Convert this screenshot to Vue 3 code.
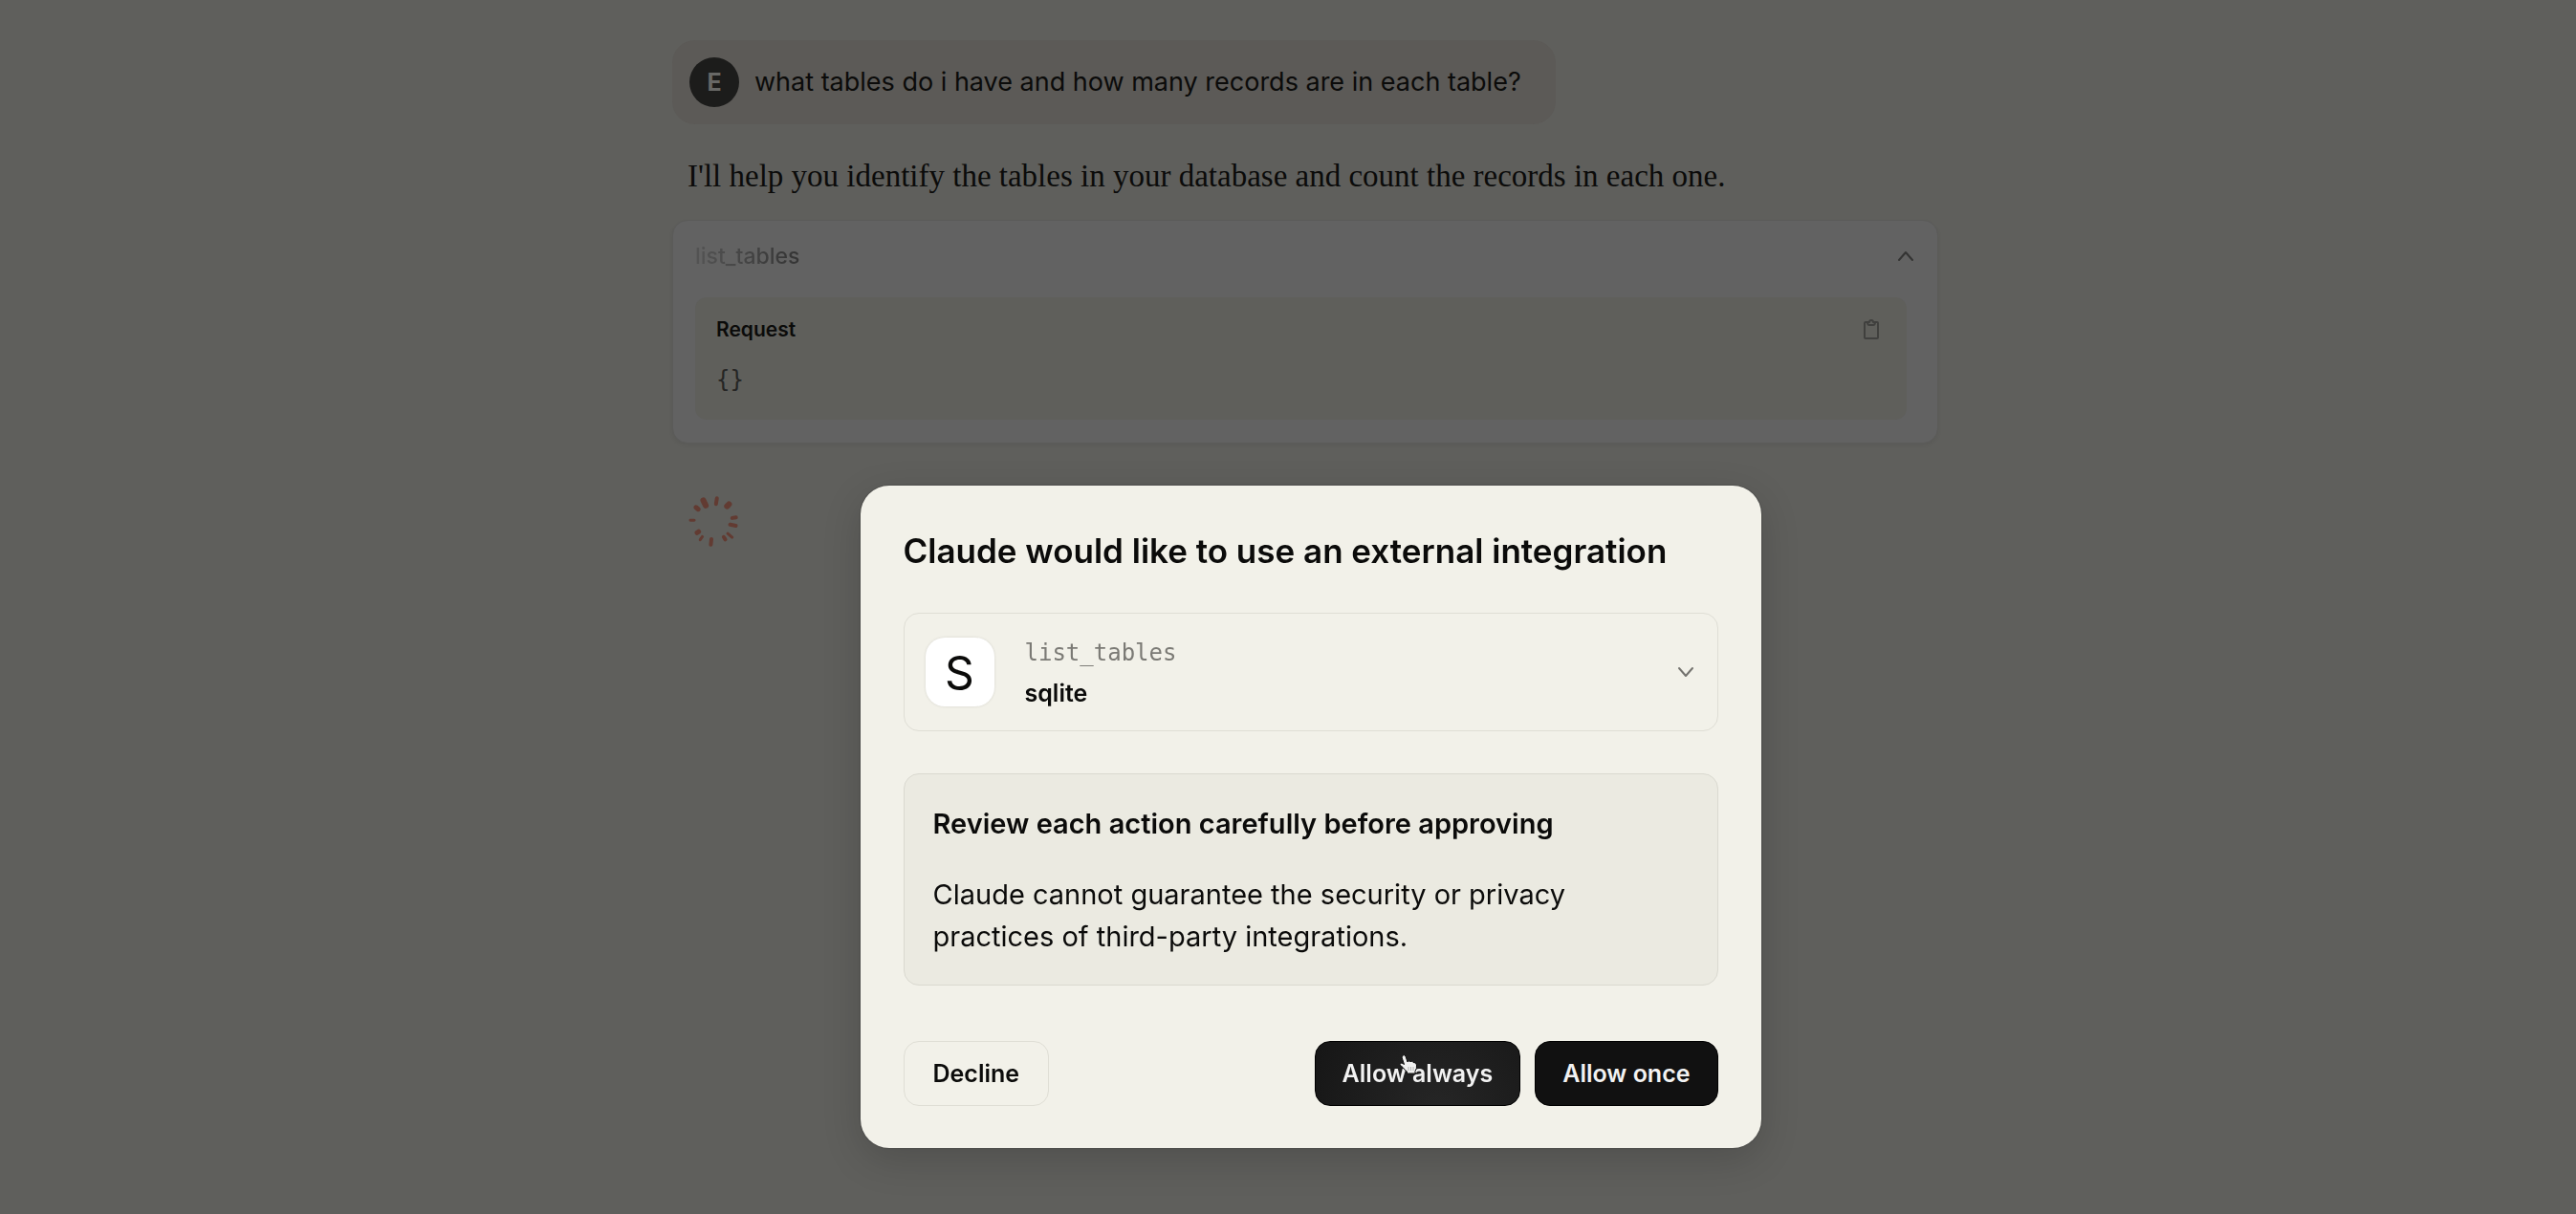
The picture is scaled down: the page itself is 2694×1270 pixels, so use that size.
<script setup>
import { ref } from 'vue'

const toolName = 'list_tables'
const serverName = 'sqlite'
const expanded = ref(true)
const dialogOpen = ref(true)

// Angle, inner radius, outer radius and thickness of every spinner petal.
const petals = [
  { angle: -26, from: 18, to: 24, width: 6 },
  { angle: 9, from: 18, to: 24, width: 4 },
  { angle: 43, from: 21, to: 24, width: 6 },
  { angle: 81, from: 20, to: 24, width: 4 },
  { angle: 102, from: 18, to: 24, width: 4 },
  { angle: 131, from: 20, to: 26, width: 3 },
  { angle: 147, from: 20, to: 23, width: 4 },
  { angle: 186, from: 19, to: 25, width: 4 },
  { angle: 215, from: 20, to: 24, width: 3 },
  { angle: 234, from: 19, to: 21, width: 5 },
  { angle: 272, from: 20, to: 24, width: 3 },
  { angle: 308, from: 20, to: 23, width: 5 },
]
</script>

<template>
  <div class="page">
    <main class="conversation">
      <div class="prompt">
        <span class="avatar">E</span>
        <p class="prompt-text">what tables do i have and how many records are in each table?</p>
      </div>

      <p class="reply">I'll help you identify the tables in your database and count the records in each one.</p>

      <section class="tool-card">
        <button class="tool-head" type="button" :aria-expanded="expanded" @click="expanded = !expanded">
          <span class="tool-name">{{ toolName }}</span>
          <svg width="18" height="12" viewBox="0 0 18 12" fill="none" stroke="#343433" stroke-width="2" stroke-linecap="round" stroke-linejoin="round" aria-hidden="true">
            <path d="M2 10 9 2l7 8" />
          </svg>
        </button>
        <div v-if="expanded" class="request">
          <div class="request-head">
            <h3 class="request-title">Request</h3>
            <button class="copy" type="button" aria-label="Copy request">
              <svg width="18" height="22" viewBox="0 0 18 22" fill="none" stroke="#40403e" stroke-width="2" stroke-linejoin="round" aria-hidden="true">
                <path d="M5 3H3Q2 3 2 4V19Q2 20 3 20H15Q16 20 16 19V4Q16 3 15 3H13" />
                <path d="M5 3H7Q7 1 9 1T11 3H13Q13 6 11 6H7Q5 6 5 3Z" />
              </svg>
            </button>
          </div>
          <pre class="request-body">{}</pre>
        </div>
      </section>

      <svg class="spinner" width="54" height="56" viewBox="-27 -28 54 56" role="img" aria-label="Working">
        <line
          v-for="p in petals"
          :key="p.angle"
          x1="0"
          x2="0"
          :y1="-p.from"
          :y2="-p.to"
          :stroke-width="p.width"
          :transform="`rotate(${p.angle})`"
        />
      </svg>
    </main>

    <div v-if="dialogOpen" class="overlay">
      <div class="dialog" role="dialog" aria-modal="true" aria-labelledby="dialog-title">
        <h2 id="dialog-title" class="dialog-title">Claude would like to use an external integration</h2>

        <button class="integration" type="button">
          <span class="logo">S</span>
          <span class="names">
            <code class="call">{{ toolName }}</code>
            <strong class="server">{{ serverName }}</strong>
          </span>
          <svg width="18" height="12" viewBox="0 0 18 12" fill="none" stroke="#74736f" stroke-width="2" stroke-linecap="round" stroke-linejoin="round" aria-hidden="true">
            <path d="M2 2l7 8 7-8" />
          </svg>
        </button>

        <section class="notice">
          <h3 class="notice-title">Review each action carefully before approving</h3>
          <p class="notice-text">Claude cannot guarantee the security or privacy practices of third-party integrations.</p>
        </section>

        <div class="actions">
          <button class="btn decline" type="button" @click="dialogOpen = false">Decline</button>
          <button class="btn solid hovered" type="button" @click="dialogOpen = false">
            Allow always
            <svg class="pointer" width="22" height="24" viewBox="0 0 22 24" aria-hidden="true">
              <path d="M5 2Q7 1 8 3L10 9Q11 7 13 8.500Q15 7.500 16 9.500Q19 9 19.500 12Q20 16 18 18.500V21H9.500V19Q7 17.500 5 14.500L2 12Q1.500 10 4 10L6.500 11.500L4 4Z" fill="#f1f1f0" stroke="#111" stroke-width="1" />
              <path d="M11 14v4M13.500 14v4M16 14v4" stroke="#b4b4b2" stroke-width="1" />
            </svg>
          </button>
          <button class="btn solid" type="button" @click="dialogOpen = false">Allow once</button>
        </div>
      </div>
    </div>
  </div>
</template>

<style>
body {
  background: #5f5f5c;
}
</style>

<style scoped>
.page {
  min-height: 100vh;
  box-sizing: border-box;
  padding: 42px 0 0 36px;
  background: #5f5f5c;
  color: #0b0b0a;
  font-family: Inter, "Liberation Sans", sans-serif;
}

h2,
h3,
p,
pre {
  margin: 0;
}

button {
  border: 0;
  background: none;
  color: inherit;
  font: inherit;
  text-align: left;
  cursor: pointer;
}

svg {
  display: block;
  flex: none;
}

.conversation {
  display: flex;
  flex-direction: column;
  align-items: flex-start;
  max-width: 1324px;
  margin: 0 auto;
}

.prompt {
  display: flex;
  align-items: center;
  gap: 16px;
  box-sizing: border-box;
  min-height: 88px;
  padding: 0 36px 0 18px;
  border-radius: 24px;
  background: #5c5a57;
}

.avatar {
  display: grid;
  place-items: center;
  flex: none;
  width: 52px;
  height: 52px;
  border-radius: 50%;
  background: #1c1c1b;
  color: #686866;
  font-size: 25px;
  font-weight: 700;
}

.prompt-text {
  font-size: 27px;
  line-height: 44px;
}

.reply {
  margin: 32px 16px 0;
  font-family: "Liberation Serif", serif;
  font-size: 33px;
  line-height: 44px;
}

.tool-card {
  align-self: stretch;
  box-sizing: border-box;
  margin-top: 24px;
  padding: 0 32px 24px 23px;
  border: 1px solid #5b5b59;
  border-radius: 16px;
  background: #626262;
  box-shadow: 0 2px 4px rgba(0, 0, 0, 0.06);
}

.tool-head {
  display: flex;
  align-items: center;
  justify-content: space-between;
  width: 100%;
  height: 80px;
  padding: 0 0 6px;
}

.tool-head svg {
  margin-right: -8px;
}

.tool-name {
  background: linear-gradient(90deg, #545454, #343434);
  background-clip: text;
  color: transparent;
  font-size: 23px;
  font-weight: 500;
  line-height: 32px;
}

.request {
  box-sizing: border-box;
  min-height: 128px;
  padding: 18px 28px 24px 22px;
  border-radius: 12px;
  background: #5f5f5b;
}

.request-head {
  display: flex;
  align-items: center;
  justify-content: space-between;
}

.request-title {
  font-size: 21px;
  font-weight: 600;
  line-height: 32px;
}

.copy {
  padding: 0;
}

.request-body {
  margin-top: 20px;
  color: #252524;
  font-family: "DejaVu Sans Mono", monospace;
  font-size: 24px;
  line-height: 32px;
}

.spinner {
  margin: 53px 0 0 16px;
  stroke: #623b32;
  stroke-linecap: round;
}

.overlay {
  position: fixed;
  inset: 0;
  display: flex;
  align-items: flex-start;
  justify-content: center;
  padding: 40vh 0 0 47px;
}

.dialog {
  display: flex;
  flex-direction: column;
  box-sizing: border-box;
  width: 942px;
  max-width: 100%;
  padding: 44px 45px;
  border-radius: 30px;
  background: #f2f1e9;
  box-shadow: 0 0 2px rgba(0, 0, 0, 0.4), 0 12px 40px rgba(0, 0, 0, 0.16);
}

.dialog-title {
  font-size: 35px;
  font-weight: 600;
  line-height: 48px;
}

.integration {
  display: flex;
  align-items: center;
  gap: 32px;
  box-sizing: border-box;
  height: 124px;
  margin-top: 41px;
  padding: 0 24px 0 22px;
  border: 1px solid #dfded5;
  border-radius: 16px;
}

.logo {
  display: grid;
  place-items: center;
  flex: none;
  width: 72px;
  height: 72px;
  border-radius: 20px;
  background: #fff;
  box-shadow: 0 0 3px rgba(0, 0, 0, 0.12);
  font-size: 48px;
}

.names {
  display: flex;
  flex: 1;
  flex-direction: column;
}

.call {
  color: #7b7a75;
  font-family: "DejaVu Sans Mono", monospace;
  font-size: 24px;
  line-height: 44px;
}

.server {
  font-size: 25px;
  font-weight: 600;
  line-height: 40px;
}

.notice {
  margin-top: 44px;
  padding: 30px 30px 28px;
  border: 1px solid #dad9d0;
  border-radius: 16px;
  background: #ebeae1;
}

.notice-title {
  font-size: 29px;
  font-weight: 600;
  line-height: 44px;
}

.notice-text {
  max-width: 720px;
  margin-top: 30px;
  font-size: 29px;
  line-height: 44px;
}

.actions {
  display: flex;
  gap: 15px;
  margin-top: 58px;
}

.btn {
  position: relative;
  box-sizing: border-box;
  height: 68px;
  padding: 0 28px;
  border: 1px solid #000;
  border-radius: 16px;
  font-size: 25px;
  font-weight: 600;
  line-height: 44px;
}

.decline {
  margin-right: auto;
  padding: 0 30px;
  border-color: #dfded5;
}

.solid {
  background: #111;
  color: #f2f2f2;
}

.hovered {
  background: radial-gradient(circle at 60% 110%, #262626, #161616);
}

.pointer {
  position: absolute;
  top: 12px;
  left: 86px;
}
</style>
